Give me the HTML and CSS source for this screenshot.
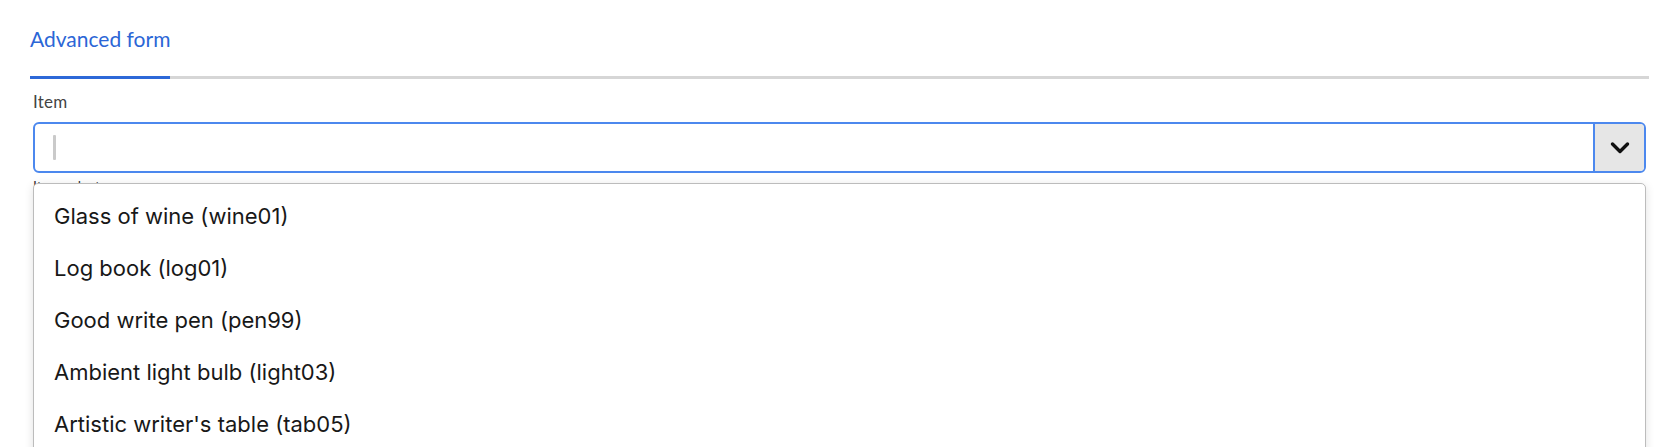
FILE: index.html
```html
<!DOCTYPE html>
<html>
<head>
<meta charset="utf-8">
<link rel="stylesheet" href="styles.css">
</head>
<body>
<div class="page">
  <div class="tabs">
    <div class="tab active">Advanced form</div>
  </div>
  <div class="form">
    <div class="field">
      <label class="label">Item</label>
      <div class="combo">
        <div class="input"><span class="caret"></span></div>
        <div class="btn">
          <svg width="20" height="14" viewBox="0 0 20 14"><path d="M2.5 3 L10 10.5 L17.5 3" fill="none" stroke="#111" stroke-width="3.4" stroke-linecap="round" stroke-linejoin="round"/></svg>
        </div>
      </div>
      <div class="help">Item selector</div>
      <ul class="menu">
        <li>Glass of wine (wine01)</li>
        <li>Log book (log01)</li>
        <li>Good write pen (pen99)</li>
        <li>Ambient light bulb (light03)</li>
        <li>Artistic writer's table (tab05)</li>
      </ul>
    </div>
  </div>
</div>
</body>
</html>
```
FILE: styles.css
```css
html, body { margin: 0; padding: 0; background: #fff; overflow: hidden; }
body { width: 1680px; height: 447px; }
.page { padding: 20px 31px 0 30px; }
.tabs { border-bottom: 3px solid #d6d6d6; display: flex; }
.tab {
  font-family: "Lato", "Open Sans", sans-serif;
  font-size: 21px;
  color: #2b66d6;
  padding: 7px 0 25px 0;
  width: 140px;
  white-space: nowrap;
  margin-bottom: -3px;
  border-bottom: 3px solid #2d68d8;
  line-height: 24px;
}
.form { padding: 13px 3px 0 3px; }
.field { position: relative; }
.label {
  display: block;
  font-family: "Lato", sans-serif;
  font-size: 17px;
  letter-spacing: 0.2px;
  color: #444;
  line-height: 20px;
  height: 30px;
}
.combo {
  display: flex;
  height: 51px;
  box-sizing: border-box;
  border: 2px solid #4c88ee;
  border-radius: 6px;
  overflow: hidden;
}
.input { flex: 1; display: flex; align-items: center; padding-left: 18px; }
.caret { width: 3px; height: 25px; background: #cacaca; border-radius: 1px; }
.btn {
  width: 49px;
  background: #e6e6e6;
  border-left: 2px solid #4c88ee;
  display: flex; align-items: center; justify-content: center;
}
.help {
  font-family: "Lato", sans-serif;
  font-size: 14px;
  color: #333;
  margin-top: 5px;
  line-height: 16px;
}
.menu {
  position: absolute;
  left: 0; right: 0;
  top: 91px;
  margin: 0;
  list-style: none;
  padding: 6px 0 0 0;
  background: #fff;
  border: 1.5px solid #bcbcbc;
  border-radius: 5px;
  box-shadow: 0 2px 10px rgba(0,0,0,0.12);
  height: 300px;
}
.menu li {
  font-family: "Inter", "Liberation Sans", sans-serif;
  font-size: 22px;
  color: #181818;
  line-height: 52px;
  height: 52px;
  padding-left: 20px;
}
```
